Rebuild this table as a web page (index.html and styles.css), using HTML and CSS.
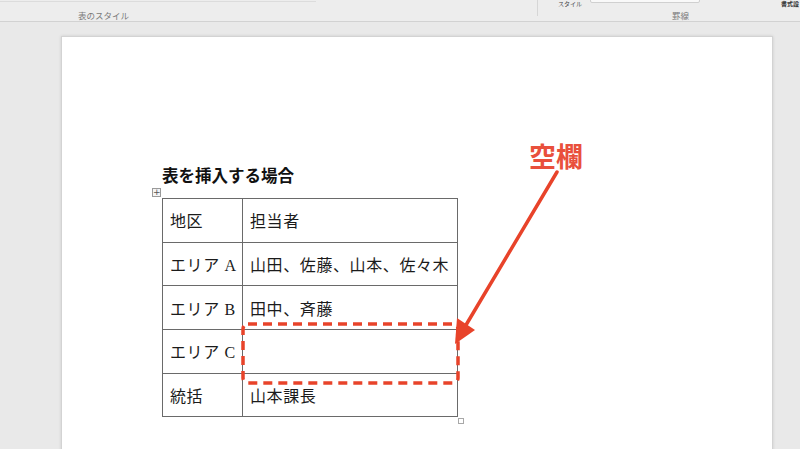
FILE: index.html
```html
<!DOCTYPE html>
<html lang="ja">
<head>
<meta charset="utf-8">
<link rel="stylesheet" href="styles.css">
</head>
<body>
<div class="toolbar">
  <div class="tb-left">
    <div class="tb-box"></div>
    <span class="tb-label tb-label-styles">表のスタイル</span>
  </div>
  <div class="tb-divider"></div>
  <div class="tb-mid">
    <div class="tb-row">
      <span class="tb-small">スタイル</span>
      <div class="tb-input"></div>
    </div>
    <span class="tb-label tb-label-border">罫線</span>
  </div>
  <div class="tb-right"><span class="tb-dark">書式設</span></div>
</div>
<div class="workspace">
  <div class="page">
    <h1 class="title">表を挿入する場合</h1>
    <div class="table-wrap">
      <span class="move-handle">+</span>
      <table class="doc-table">
        <colgroup><col class="c1"><col class="c2"></colgroup>
        <tr><td>地区</td><td>担当者</td></tr>
        <tr><td>エリア A</td><td>山田、佐藤、山本、佐々木</td></tr>
        <tr><td>エリア B</td><td>田中、斉藤</td></tr>
        <tr><td>エリア C</td><td></td></tr>
        <tr><td>統括</td><td>山本課長</td></tr>
      </table>
      <span class="resize-handle"></span>
    </div>
  </div>
</div>
<svg class="annot" width="800" height="449" viewBox="0 0 800 449">
  <rect x="243" y="324" width="215" height="59" rx="5" fill="none" stroke="#e8432a" stroke-width="3.5" stroke-dasharray="9 6"/>
  <line x1="557" y1="172" x2="466" y2="325" stroke="#e8432a" stroke-width="3.5" stroke-linecap="round"/>
  <polygon points="455,344 475,330 457,318" fill="#e8432a"/>
</svg>
<div class="callout">空欄</div>
</body>
</html>
```

FILE: styles.css
```css
html, body {
  margin: 0;
  padding: 0;
}
body {
  width: 800px;
  height: 449px;
  overflow: hidden;
  background: #e9e9e9;
  font-family: "Noto Sans CJK JP", sans-serif;
  position: relative;
}
.toolbar {
  height: 22px;
  background: #ededed;
  border-bottom: 1px solid #d2d2d2;
  display: flex;
  box-sizing: border-box;
}
.tb-left {
  width: 537px;
  position: relative;
}
.tb-box {
  width: 316px;
  height: 1px;
  border-bottom: 1px solid #dcdcdc;
}
.tb-label {
  position: absolute;
  top: 9px;
  font-size: 8.5px;
  color: #7a7a7a;
  line-height: 12px;
  white-space: nowrap;
}
.tb-label-styles { left: 78px; }
.tb-divider {
  width: 1px;
  height: 16px;
  background: #d6d6d6;
}
.tb-mid {
  width: 240px;
  position: relative;
}
.tb-row {
  display: flex;
  align-items: flex-start;
  height: 6px;
}
.tb-small {
  margin-left: 20px;
  font-size: 6px;
  line-height: 7px;
  color: #444;
  white-space: nowrap;
}
.tb-input {
  margin-left: 8px;
  width: 108px;
  height: 3px;
  margin-top: -2px;
  background: #f9f9f9;
  border: 1px solid #d0d0d0;
  border-radius: 2px;
}
.tb-label-border { left: 134px; }
.tb-right {
  flex: 1;
  position: relative;
  overflow: hidden;
}
.tb-dark {
  position: absolute;
  left: 3px;
  top: 0;
  font-size: 6px;
  color: #333;
  font-weight: 700;
  line-height: 7px;
  white-space: nowrap;
}
.workspace {
  padding: 14px 0 0 61px;
}
.page {
  width: 712px;
  height: 430px;
  box-sizing: border-box;
  background: #fff;
  border: 1px solid #d3d3d3;
  box-shadow: 0 0 3px rgba(0,0,0,0.12);
  padding: 128px 0 0 100px;
}
.title {
  margin: 0 0 13px 0;
  font-size: 16.5px;
  line-height: 20px;
  font-weight: 700;
  color: #111;
}
.table-wrap {
  position: relative;
  display: inline-block;
}
.move-handle {
  position: absolute;
  left: -10px;
  top: -10px;
  width: 7px;
  height: 7px;
  border: 1px solid #9a9a9a;
  background: #f4f4f4;
  font-size: 9px;
  line-height: 7px;
  text-align: center;
  color: #555;
  font-family: "DejaVu Sans", sans-serif;
}
.resize-handle {
  position: absolute;
  right: -6px;
  bottom: -7px;
  width: 4px;
  height: 4px;
  border: 1px solid #a8a8a8;
  background: #fff;
}
.doc-table {
  border-collapse: collapse;
  table-layout: fixed;
  width: 295px;
  font-family: "Liberation Serif", "Noto Sans CJK JP", serif;
  font-size: 16px;
  color: #1b1b1b;
}
.doc-table col.c1 { width: 80px; }
.doc-table col.c2 { width: 215px; }
.doc-table td {
  border: 1px solid #6a6a6a;
  height: 43.7px;
  padding: 0 0 0 7px;
  box-sizing: border-box;
  vertical-align: middle;
  letter-spacing: 0.6px;
  white-space: nowrap;
  overflow: hidden;
}
.annot {
  position: absolute;
  left: 0;
  top: 0;
  pointer-events: none;
}
.callout {
  position: absolute;
  left: 529px;
  top: 138px;
  font-size: 27px;
  line-height: 36px;
  font-weight: 700;
  color: #e9503c;
}
```
